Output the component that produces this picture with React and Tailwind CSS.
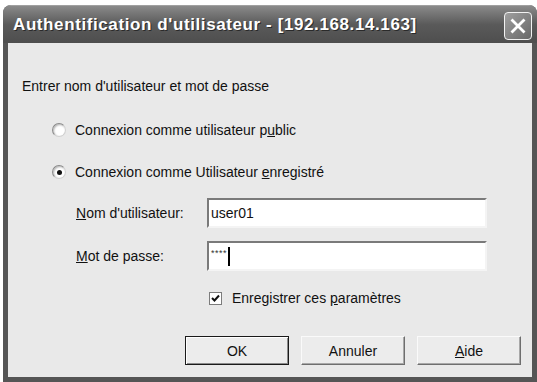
import { useState } from 'react';

function Radio({ checked }) {
  return (
    <span className="relative inline-flex h-[14px] w-[14px] shrink-0 items-center justify-center rounded-full border border-t-[#8a8a8a] border-l-[#8a8a8a] border-r-[#d0d0d0] border-b-[#d0d0d0] bg-white shadow-[inset_1px_1px_2px_rgba(0,0,0,0.3)]">
      {checked && <span className="h-[5px] w-[5px] rounded-full bg-[#111]" />}
    </span>
  );
}

function Btn({ children, primary }) {
  return (
    <button
      className={
        'flex h-[29px] w-[104px] items-center justify-center bg-[#ececec] text-[14px] text-[#111] ' +
        (primary
          ? 'border border-[#1a1a1a] shadow-[inset_1px_1px_0_#fff,inset_-1px_-1px_0_#8a8a8a]'
          : 'border border-t-[#fafafa] border-l-[#fafafa] border-r-[#6e6e6e] border-b-[#6e6e6e] shadow-[inset_-1px_-1px_0_#a8a8a8]')
      }
    >
      {children}
    </button>
  );
}

export default function App() {
  const [user, setUser] = useState('user01');
  const [remember] = useState(true);

  return (
    <div className="h-[382px] w-[537px] overflow-hidden bg-white pl-[3px] pt-[5px] font-['Liberation_Sans',Arial,sans-serif]">
      <div className="flex h-[377px] w-[534px] flex-col overflow-hidden rounded-t-[8px] bg-[#555555]">
        {/* title bar */}
        <div className="flex h-[38px] shrink-0 items-center justify-between border-t border-[#a0a0a0] bg-gradient-to-b from-[#8a8a8a] via-[#5a5a5a] to-[#4e4e4e] pl-[10px] pr-[5px]">
          <span className="text-[17px] font-bold tracking-[0.6px] text-white [text-shadow:1px_1px_0_#2a2a2a]">
            Authentification d'utilisateur - [192.168.14.163]
          </span>
          <button className="mt-[3px] flex h-[28px] w-[28px] items-center justify-center rounded-[4px] border border-[#f2f2f2] bg-gradient-to-br from-[#a0a0a0] to-[#686868]">
            <svg width="16" height="16" viewBox="0 0 16 16">
              <path d="M2.5 2.5 L13.5 13.5 M13.5 2.5 L2.5 13.5" stroke="#fff" strokeWidth="2.8" strokeLinecap="square" />
            </svg>
          </button>
        </div>

        {/* body */}
        <div className="mx-[5px] mb-[5px] flex flex-1 flex-col bg-[#e9e9e9] text-[14px] leading-[16px] text-[#111]">
          <div className="pl-[14px] pt-[35px]">Entrer nom d'utilisateur et mot de passe</div>

          <div className="mt-[28px] flex flex-col gap-[26px] pl-[44px]">
            <label className="flex items-center gap-[9px]">
              <Radio />
              <span>
                Connexion comme utilisateur p<span className="underline">u</span>blic
              </span>
            </label>
            <label className="flex items-center gap-[9px]">
              <Radio checked />
              <span>
                Connexion comme Utilisateur <span className="underline">e</span>nregistré
              </span>
            </label>
          </div>

          <div className="mt-[18px] flex flex-col gap-[13px] pl-[68px]">
            <div className="flex items-center">
              <span className="w-[131px]">
                <span className="underline">N</span>om d'utilisateur:
              </span>
              <input
                value={user}
                onChange={(e) => setUser(e.target.value)}
                className="h-[30px] w-[280px] border-2 border-t-[#7a7a7a] border-l-[#7a7a7a] border-r-[#f4f4f4] border-b-[#f4f4f4] bg-white px-[2px] text-[14px] text-[#111] outline-none"
              />
            </div>
            <div className="flex items-center">
              <span className="w-[131px]">
                <span className="underline">M</span>ot de passe:
              </span>
              <div className="flex h-[30px] w-[280px] items-center border-2 border-t-[#7a7a7a] border-l-[#7a7a7a] border-r-[#f4f4f4] border-b-[#f4f4f4] bg-white px-[2px]">
                <span className="mt-[-6px] text-[9px] tracking-[0.5px] text-[#333]">****</span>
                <span className="ml-[1px] h-[19px] w-[2px] bg-black" />
              </div>
            </div>
          </div>

          <label className="ml-[201px] mt-[19px] flex items-center gap-[10px]">
            <span className="flex h-[13px] w-[13px] items-center justify-center border border-[#7c7c7c] bg-white">
              {remember && (
                <svg width="9" height="9" viewBox="0 0 9 9">
                  <path d="M1 4 L3.5 6.5 L8 1.5" stroke="#111" strokeWidth="2" fill="none" />
                </svg>
              )}
            </span>
            <span>
              Enregistrer ces <span className="underline">p</span>aramètres
            </span>
          </label>

          <div className="ml-[177px] mt-[30px] flex gap-[12px]">
            <Btn primary>OK</Btn>
            <Btn>Annuler</Btn>
            <Btn>
              <span className="underline">A</span>ide
            </Btn>
          </div>
        </div>
      </div>
    </div>
  );
}
